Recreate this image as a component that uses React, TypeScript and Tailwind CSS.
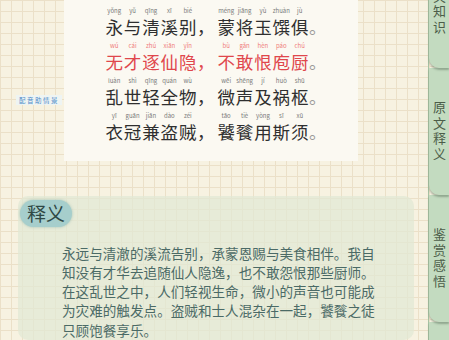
const FONT = "font-['Noto_Sans_CJK_SC','Noto_Sans',sans-serif]";

type Word = { py: string; ch: string };

const poem: { red?: boolean; a: Word[]; b: Word[] }[] = [
  {
    a: [
      { py: 'yǒng', ch: '永' },
      { py: 'yǔ', ch: '与' },
      { py: 'qīng', ch: '清' },
      { py: 'xī', ch: '溪' },
      { py: 'bié', ch: '别' },
    ],
    b: [
      { py: 'méng', ch: '蒙' },
      { py: 'jiāng', ch: '将' },
      { py: 'yù', ch: '玉' },
      { py: 'zhuàn', ch: '馔' },
      { py: 'jù', ch: '俱' },
    ],
  },
  {
    red: true,
    a: [
      { py: 'wú', ch: '无' },
      { py: 'cái', ch: '才' },
      { py: 'zhú', ch: '逐' },
      { py: 'xiān', ch: '仙' },
      { py: 'yǐn', ch: '隐' },
    ],
    b: [
      { py: 'bù', ch: '不' },
      { py: 'gǎn', ch: '敢' },
      { py: 'hèn', ch: '恨' },
      { py: 'páo', ch: '庖' },
      { py: 'chú', ch: '厨' },
    ],
  },
  {
    a: [
      { py: 'luàn', ch: '乱' },
      { py: 'shì', ch: '世' },
      { py: 'qīng', ch: '轻' },
      { py: 'quán', ch: '全' },
      { py: 'wù', ch: '物' },
    ],
    b: [
      { py: 'wēi', ch: '微' },
      { py: 'shēng', ch: '声' },
      { py: 'jí', ch: '及' },
      { py: 'huò', ch: '祸' },
      { py: 'shū', ch: '枢' },
    ],
  },
  {
    a: [
      { py: 'yī', ch: '衣' },
      { py: 'guān', ch: '冠' },
      { py: 'jiān', ch: '兼' },
      { py: 'dào', ch: '盗' },
      { py: 'zéi', ch: '贼' },
    ],
    b: [
      { py: 'tāo', ch: '饕' },
      { py: 'tiè', ch: '餮' },
      { py: 'yòng', ch: '用' },
      { py: 'sī', ch: '斯' },
      { py: 'xū', ch: '须' },
    ],
  },
];

const meaning = [
  '永远与清澈的溪流告别，承蒙恩赐与美食相伴。我自',
  '知没有才华去追随仙人隐逸，也不敢怨恨那些厨师。',
  '在这乱世之中，人们轻视生命，微小的声音也可能成',
  '为灾难的触发点。盗贼和士人混杂在一起，饕餮之徒',
  '只顾饱餐享乐。',
];

const tabs = ['相关知识', '原文释义', '鉴赏感悟', '拓展阅读'];

const Cell = ({ w, red }: { w: Word; red?: boolean }) => (
  <div className="flex w-[18.4px] flex-col items-center">
    <span className={`h-[9px] text-[6px] leading-[9px] whitespace-nowrap ${red ? 'text-[#ef7b7b]' : 'text-[#7a7a7a]'}`}>
      {w.py}
    </span>
    <span className={`text-[17.5px] leading-[24px] ${red ? 'text-[#e0474c]' : 'text-[#2f2f2f]'}`}>{w.ch}</span>
  </div>
);

export default function App() {
  return (
    <div
      className={`${FONT} flex h-[340px] w-[449px] overflow-hidden bg-[#f7f2e1] bg-[linear-gradient(to_right,#ebe0c8_1px,transparent_1px),linear-gradient(to_bottom,#ebe0c8_1px,transparent_1px)] bg-[size:11px_11px]`}
    >
      {/* main area */}
      <div className="flex w-[428px] flex-col">
        <div className="flex h-[165px]">
          <div className="flex w-[64px] flex-col items-start pt-[95px] pl-[16px]">
            <span className="bg-[#eef4f3] px-[3px] text-[6.5px] leading-[10px] tracking-[1.5px] text-[#4f8cc9]">
              配音助情景
            </span>
          </div>
          <div className="flex w-[294px] flex-col gap-[2px] bg-[#fbf9f2] pt-[6px] pl-[41px]">
            {poem.map((line, i) => (
              <div key={i} className="flex items-end">
                {line.a.map((w, j) => (
                  <Cell key={j} w={w} red={line.red} />
                ))}
                <span className={`w-[20px] text-[17.5px] leading-[24px] ${line.red ? 'text-[#e0474c]' : 'text-[#2f2f2f]'}`}>，</span>
                {line.b.map((w, j) => (
                  <Cell key={j} w={w} red={line.red} />
                ))}
                <span className="text-[17.5px] leading-[24px] text-[#9a9a9a]">。</span>
              </div>
            ))}
          </div>
        </div>

        <div className="mt-[35px] mr-[14px] ml-[18px] flex flex-1 flex-col rounded-[10px] bg-[#e2e8d4]/75 pt-[4px] pl-[2px]">
          <div className="flex h-[27px] w-[52px] items-center justify-center rounded-full bg-[#a6cecc] text-[19px] text-[#2f4845] shadow-[0_0_3px_rgba(120,170,165,0.6)]">
            释义
          </div>
          <div className="mt-[17px] ml-[42px] flex flex-col text-[13.6px] leading-[19.3px] text-[#4b6a66]">
            {meaning.map((l, i) => (
              <span key={i} className="whitespace-nowrap">
                {l}
              </span>
            ))}
          </div>
        </div>
      </div>

      {/* tab strip */}
      <div className="-mt-[59px] flex w-[21px] flex-col border-l border-[#a7c2a3]">
        {tabs.map((t, i) => (
          <div
            key={t}
            className={`relative flex h-[127px] shrink-0 items-center justify-center rounded-bl-[10px] bg-[#c3dbc0] shadow-[0_2px_2px_rgba(70,90,70,0.4)] ${
              i === 0 ? 'z-40' : i === 1 ? 'z-30' : i === 2 ? 'z-20' : 'z-10'
            }`}
          >
            <span className="text-[13px] leading-[20px] tracking-[2.5px] text-[#4c5d49] [writing-mode:vertical-rl]">
              {t}
            </span>
          </div>
        ))}
      </div>
    </div>
  );
}
